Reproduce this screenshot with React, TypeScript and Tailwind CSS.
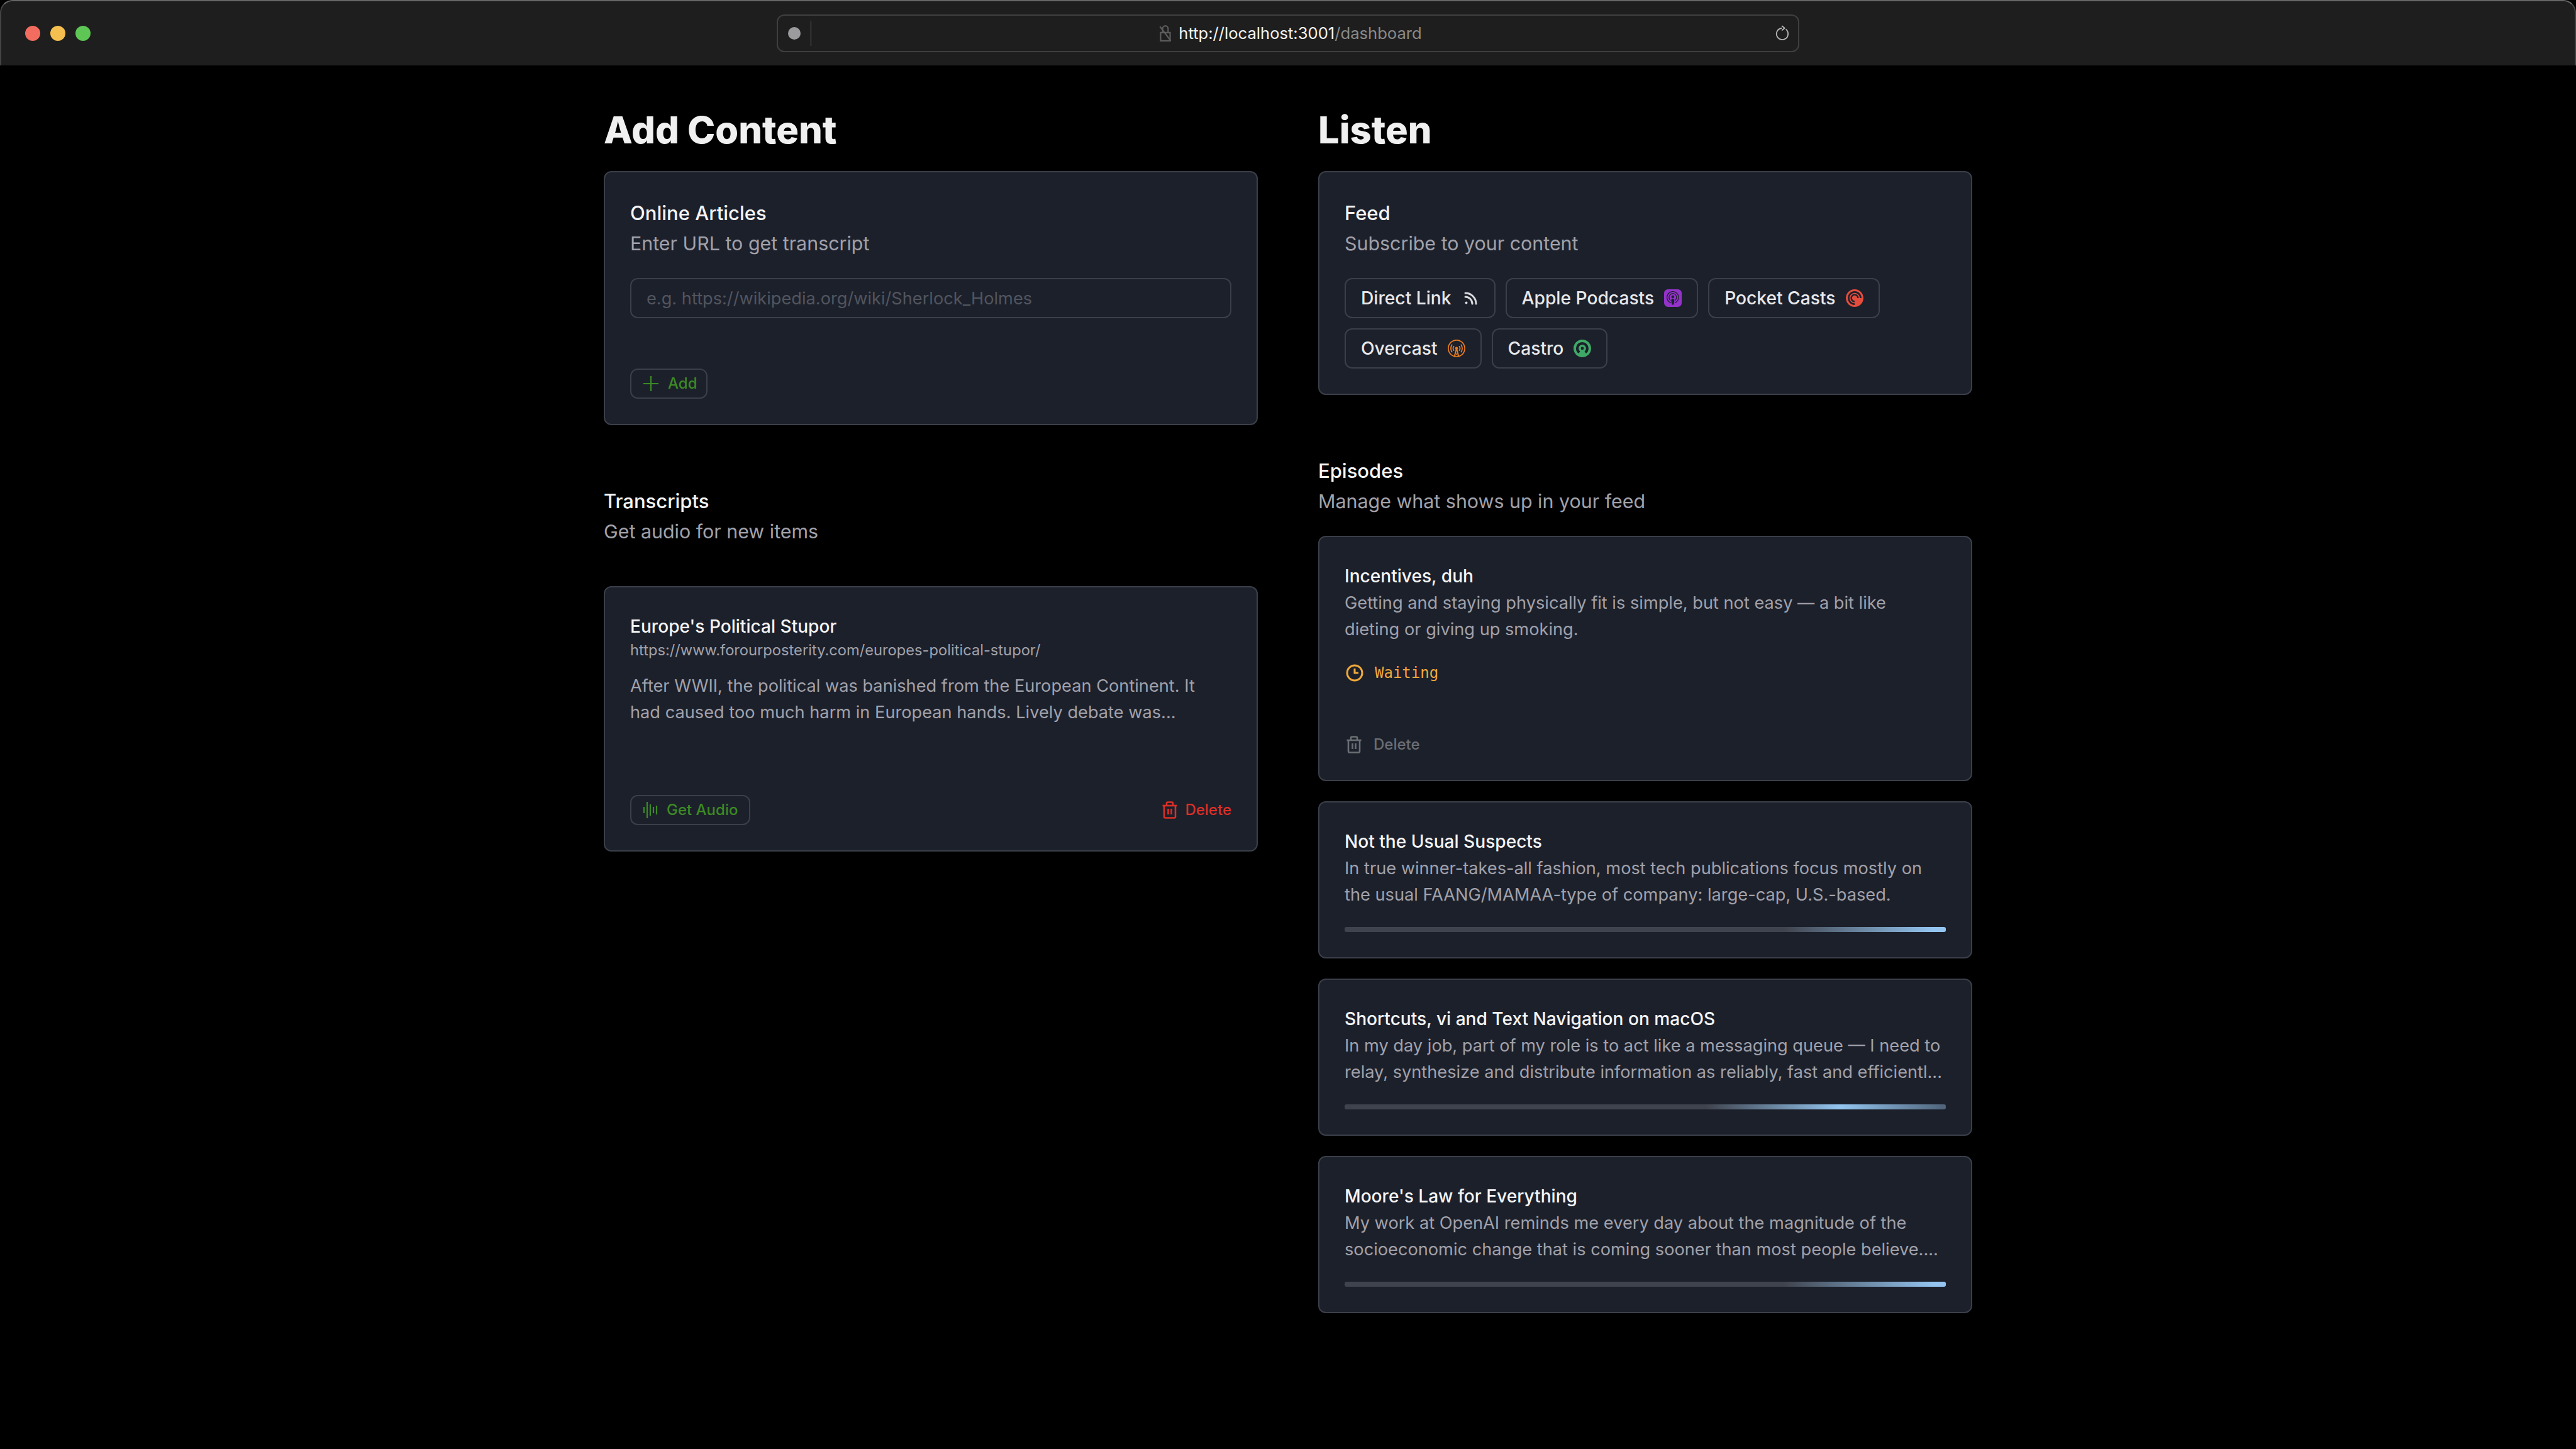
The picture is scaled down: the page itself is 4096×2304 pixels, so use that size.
import { SiApplepodcasts, SiPocketcasts, SiOvercast, SiCastro } from "react-icons/si";

// text was set at 2x in the source, so pin the optical size to the small cut
const sans = "font-['Inter','Liberation_Sans',sans-serif] [font-variation-settings:'opsz'_14]";

function TrashIcon({ className }: { className: string }) {
  return (
    <svg viewBox="0 0 24 28" fill="none" stroke="currentColor" strokeWidth="2.6" className={className}>
      <path d="M0.5 7h23" />
      <path d="M7 7V3.5a2 2 0 0 1 2-2h6a2 2 0 0 1 2 2V7" />
      <path d="M3 7v17.5a2 2 0 0 0 2 2h14a2 2 0 0 0 2-2V7" />
      <path d="M9.5 12v9M14.5 12v9" />
    </svg>
  );
}

function WaveIcon() {
  return (
    <svg viewBox="0 0 24 28" fill="none" stroke="currentColor" strokeWidth="2.2" className="w-[24px] h-[28px]">
      <path d="M2 9v10M7 1v26M12 5v18M17 9v10M22 7v14" />
    </svg>
  );
}

function PlusIcon() {
  return (
    <svg viewBox="0 0 26 26" fill="none" stroke="currentColor" strokeWidth="2.2" className="w-[26px] h-[26px]">
      <path d="M13 1v24M1 13h24" />
    </svg>
  );
}

function ClockIcon() {
  return (
    <svg viewBox="0 0 28 28" fill="none" stroke="currentColor" strokeWidth="3" className="w-[28px] h-[28px]">
      <circle cx="14" cy="14" r="12" />
      <path d="M14 7v7h6" />
    </svg>
  );
}

function RssIcon() {
  return (
    <svg viewBox="0 0 28 28" fill="none" stroke="currentColor" strokeWidth="3" strokeLinecap="round" className="w-[28px] h-[28px] text-[#d8d9dc]">
      <path d="M6 12a11 11 0 0 1 11 11" />
      <path d="M6 6a17 17 0 0 1 17 17" />
      <circle cx="7.5" cy="21.5" r="2" fill="currentColor" stroke="none" />
    </svg>
  );
}

function Card({ children, className = "" }: { children: React.ReactNode; className?: string }) {
  return (
    <div className={`bg-[#1c202b] border-2 border-[#3b3f4a] rounded-[12px] p-[40px] ${className}`}>
      {children}
    </div>
  );
}

function SectionHead({ title, sub }: { title: string; sub: string }) {
  return (
    <div className="pt-[1px] -mb-[1px]">
      <h2 className="text-[31px] leading-[48px] font-medium text-[#f4f4f5]">{title}</h2>
      <p className="text-[30.4px] leading-[48px] text-[#a1a1aa]">{sub}</p>
    </div>
  );
}

function FeedButton({ label, children }: { label: string; children: React.ReactNode }) {
  return (
    <button className="h-[64px] flex items-center gap-[16px] px-[24px] border-2 border-[#3b3f4a] rounded-[12px] text-[28.2px] font-medium text-[#e8e8ea]">
      {label}
      {children}
    </button>
  );
}

const episodes = [
  {
    title: "Not the Usual Suspects",
    line1: "In true winner-takes-all fashion, most tech publications focus mostly on",
    line2: "the usual FAANG/MAMAA-type of company: large-cap, U.S.-based.",
    bar: "bg-[linear-gradient(90deg,#3f434d_73%,#93c5f0_98%,#93c5f0_100%)]",
  },
  {
    title: "Shortcuts, vi and Text Navigation on macOS",
    line1: "In my day job, part of my role is to act like a messaging queue — I need to",
    line2: "relay, synthesize and distribute information as reliably, fast and efficientl...",
    bar: "bg-[linear-gradient(90deg,#3f434d_60%,#93c5f0_82.5%,#4f6379_100%)]",
  },
  {
    title: "Moore's Law for Everything",
    line1: "My work at OpenAI reminds me every day about the magnitude of the",
    line2: "socioeconomic change that is coming sooner than most people believe....",
    bar: "bg-[linear-gradient(90deg,#3f434d_73%,#93c5f0_98%,#93c5f0_100%)]",
  },
];

export default function App() {
  return (
    <div className={`w-[4096px] h-[2304px] bg-black overflow-hidden ${sans}`}>
      {/* browser chrome */}
      <div className="h-[104px] bg-[#1e1e1e] border-t-2 border-x-2 border-t-[#666666] border-x-[#444444] rounded-t-[20px] flex items-center relative">
        <div className="flex gap-[16px] ml-[38px]">
          <span className="w-[24px] h-[24px] rounded-full bg-[#f26d60]" />
          <span className="w-[24px] h-[24px] rounded-full bg-[#f5bf4f]" />
          <span className="w-[24px] h-[24px] rounded-full bg-[#5ec655]" />
        </div>
        <div className="absolute left-[1233px] top-[21px] w-[1626px] h-[60px] border-2 border-[#3f3f3f] rounded-[12px] flex items-center">
          <span className="w-[20px] h-[20px] rounded-full bg-[#9b9b9e] ml-[16px]" />
          <span className="w-px h-[40px] bg-[#6a6a6a] ml-[16px]" />
          <div className="flex-1 flex items-center justify-center gap-[10px] pr-[10px]">
            <svg viewBox="0 0 20 26" fill="none" stroke="#5d5d5d" strokeWidth="2" className="w-[22px] h-[28px]">
              <path d="M3 12h14v12H3z" />
              <path d="M6 12V6a4 4 0 0 1 8 0v6" />
              <path d="M2 3l16 21" />
            </svg>
            <span className="text-[25.6px] text-[#f2f2f2] [font-variation-settings:'opsz'_28]">
              http://localhost:3001<span className="text-[#8a8a8a]">/dashboard</span>
            </span>
          </div>
          <svg viewBox="0 0 24 28" fill="none" stroke="#b5b5b5" strokeWidth="2" className="w-[22px] h-[26px] mr-[14px]">
            <path d="M18 7a10 10 0 1 1-7-2" />
            <path d="M11 1l5 4-5 4" />
          </svg>
        </div>
      </div>

      <main className="flex justify-center gap-[96px] pt-[64px]">
        {/* left column */}
        <div className="w-[1040px]">
          <h1 className="text-[59.6px] leading-[72px] pt-[2px] font-extrabold text-[#f0f0f0] mb-[30px] [font-variation-settings:'opsz'_30]">Add Content</h1>
          <Card>
            <SectionHead title="Online Articles" sub="Enter URL to get transcript" />
            <div className="mt-[32px] h-[64px] border-2 border-[#3b3f4a] rounded-[12px] px-[24px] pt-[2px] flex items-center text-[27.2px] text-[#51555e]">
              e.g. https://wikipedia.org/wiki/Sherlock_Holmes
            </div>
            <button className="mt-[80px] h-[48px] flex items-center gap-[14px] pl-[18px] pr-[14px] border-2 border-[#3b3f4a] rounded-[12px] text-[24px] font-medium text-[#3c8a24]">
              <PlusIcon />
              Add
            </button>
          </Card>

          <div className="mt-[96px]">
            <SectionHead title="Transcripts" sub="Get audio for new items" />
          </div>

          <Card className="mt-[64px]">
            <h3 className="text-[28.1px] leading-[44px] font-medium text-[#f4f4f5]">Europe's Political Stupor</h3>
            <p className="text-[23.7px] leading-[32px] text-[#a1a1aa]">https://www.forourposterity.com/europes-political-stupor/</p>
            <p className="mt-[20px] text-[27.2px] leading-[42px] text-[#a1a1aa]">
              After WWII, the political was banished from the European Continent. It
              <br />
              had caused too much harm in European hands. Lively debate was...
            </p>
            <div className="mt-[110px] flex items-center justify-between">
              <button className="h-[48px] flex items-center gap-[14px] pl-[18px] pr-[18px] border-2 border-[#3b3f4a] rounded-[12px] text-[24px] font-medium text-[#3c8a24]">
                <WaveIcon />
                Get Audio
              </button>
              <button className="flex items-center gap-[12px] text-[24px] font-medium text-[#dc2f26]">
                <TrashIcon className="w-[24px] h-[28px]" />
                Delete
              </button>
            </div>
          </Card>
        </div>

        {/* right column */}
        <div className="w-[1040px]">
          <h1 className="text-[59.6px] leading-[72px] pt-[2px] font-extrabold text-[#f0f0f0] mb-[30px] [font-variation-settings:'opsz'_30]">Listen</h1>
          <Card>
            <SectionHead title="Feed" sub="Subscribe to your content" />
            <div className="mt-[32px] flex flex-wrap gap-[16px]">
              <FeedButton label="Direct Link">
                <RssIcon />
              </FeedButton>
              <FeedButton label="Apple Podcasts">
                <SiApplepodcasts className="w-[28px] h-[28px] text-[#9333c9]" />
              </FeedButton>
              <FeedButton label="Pocket Casts">
                <SiPocketcasts className="w-[28px] h-[28px] text-[#e44d3c]" />
              </FeedButton>
              <FeedButton label="Overcast">
                <SiOvercast className="w-[28px] h-[28px] text-[#e87d22]" />
              </FeedButton>
              <FeedButton label="Castro">
                <SiCastro className="w-[28px] h-[28px] text-[#3fa866]" />
              </FeedButton>
            </div>
          </Card>

          <div className="mt-[96px] mb-[32px]">
            <SectionHead title="Episodes" sub="Manage what shows up in your feed" />
          </div>

          <div className="flex flex-col gap-[32px]">
            <Card>
              <h3 className="text-[28.1px] leading-[44px] font-medium text-[#f4f4f5]">Incentives, duh</h3>
              <p className="text-[27.2px] leading-[42px] text-[#a1a1aa]">
                Getting and staying physically fit is simple, but not easy — a bit like
                <br />
                dieting or giving up smoking.
              </p>
              <div className="mt-[24px] ml-[2px] h-[48px] flex items-center gap-[18px] text-[#f0a93a]">
                <ClockIcon />
                <span className="font-['DejaVu_Sans_Mono',monospace] text-[24px]">Waiting</span>
              </div>
              <button className="mt-[74px] ml-[3px] h-[32px] flex items-center gap-[19px] text-[24px] font-medium text-[#6b6e73]">
                <TrashIcon className="w-[24px] h-[28px]" />
                Delete
              </button>
            </Card>
            {episodes.map((ep) => (
              <Card key={ep.title}>
                <h3 className="text-[28.1px] leading-[44px] font-medium text-[#f4f4f5]">{ep.title}</h3>
                <p className="text-[27.2px] leading-[42px] text-[#a1a1aa]">
                  {ep.line1}
                  <br />
                  {ep.line2}
                </p>
                <div className={`mt-[30px] h-[8px] rounded-[3px] ${ep.bar}`} />
              </Card>
            ))}
          </div>
        </div>
      </main>
    </div>
  );
}
